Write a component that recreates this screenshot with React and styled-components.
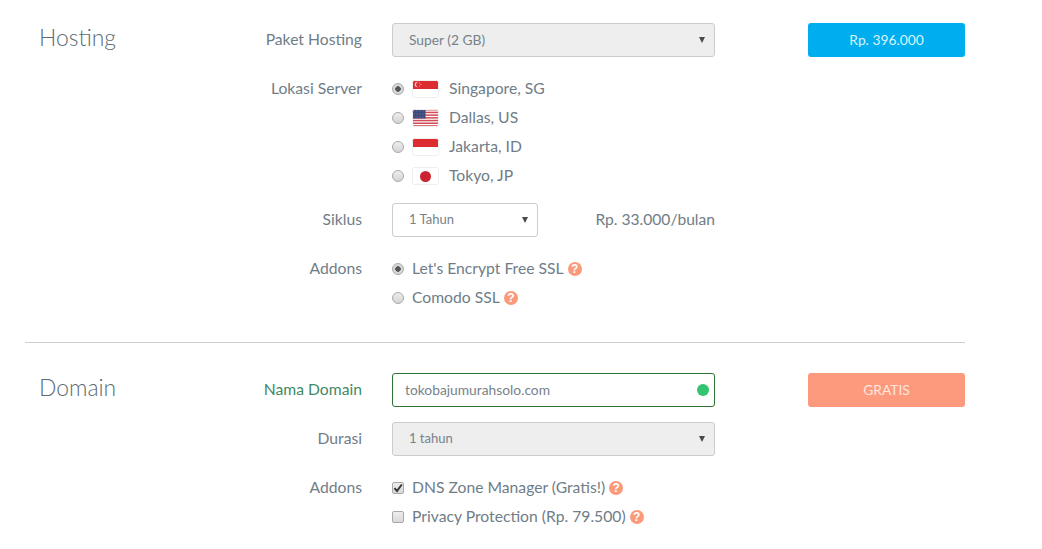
import React from "react";
import styled, { createGlobalStyle } from "styled-components";

const Global = createGlobalStyle`
  html, body { margin: 0; padding: 0; background: #fff; }
  body { font-family: "Lato", "Open Sans", sans-serif; color: #6f7d88; overflow: hidden; height: 549px; }
`;
const Page = styled.div`width: 940px; margin-left: 25px; padding-top: 23px;`;
const Section = styled.section`
  display: flex;
  padding-bottom: ${p => p.$pb || 0}px;
  border-bottom: ${p => (p.$line ? "1px solid #cfcfcf" : "none")};
  margin-bottom: ${p => p.$mb || 0}px;
`;
const Title = styled.h2`
  width: 215px; margin: 0; padding-left: 14px; box-sizing: border-box;
  font-size: 22.9px; font-weight: 300; line-height: 28px; color: #5c6a73;
`;
const Fields = styled.div`display: flex; flex-direction: column;`;
const Row = styled.div`display: flex; align-items: flex-start; margin-bottom: ${p => p.$mb ?? 0}px;`;
const Label = styled.label`
  width: 122px; margin-right: 30px; text-align: right; font-size: 15.7px; white-space: nowrap;
  line-height: ${p => p.$lh || 32}px; color: ${p => p.$ok ? "#3f8a64" : "#6f7d88"}; flex: none;
`;
const Control = styled.div`width: 323px; flex: none;`;
const SelectBox = styled.div`
  display: flex; align-items: center; justify-content: space-between; box-sizing: border-box;
  width: ${p => p.$w || 323}px; height: 34px; padding: 0 9px 2px 16px; border-radius: 3px;
  border: 1px solid #cccccc; background: ${p => p.$plain ? "#fff" : "#eeeeee"};
  font-size: ${p => p.$fs || 13.8}px; color: #77828b;
`;
const Caret = styled.i`
  width: 0; height: 0; margin-top: 2px; border-left: 3.5px solid transparent; border-right: 3.5px solid transparent;
  border-top: 6px solid #4a4a4a;
`;
const Side = styled.div`
  box-sizing: border-box; padding-bottom: 2px;
  width: 157px; height: 34px; margin-left: 93px; flex: none; border-radius: 3px;
  display: flex; align-items: center; justify-content: center; font-size: 13.8px;
  color: ${p => p.$fg}; background: ${p => p.$bg};
`;
const Options = styled.div`display: flex; flex-direction: column;`;
const Option = styled.div`
  box-sizing: border-box; padding-bottom: 2px;
  display: flex; align-items: center; height: 29px; font-size: 15.7px; color: #6f7d88; white-space: nowrap;
`;
const Radio = styled.span`
  box-sizing: border-box; width: 12px; height: 12px; border-radius: 50%; flex: none; margin: 2px 8px 0 0;
  border: 1px solid #a9a9a9; background: ${p => p.$on ? "radial-gradient(circle, #555 0 2.5px, #d8d8d8 3px)" : "linear-gradient(#eeeeee, #d4d4d4)"};
`;
const Check = styled.span`
  box-sizing: border-box; width: 12px; height: 12px; border-radius: 2px; flex: none; margin: 2px 8px 0 0;
  border: 1px solid #a9a9a9; background: linear-gradient(#eeeeee, #d8d8d8);
  display: flex; align-items: center; justify-content: center;
`;
const FlagSvg = styled.svg`width: 27px; height: 18px; flex: none; margin: 2px 10px 0 0; display: block;`;
const Help = styled.span`
  width: 14px; height: 14px; border-radius: 50%; background: #fb9a7b; color: #fff; margin: 2px 0 0 4px; flex: none;
  display: inline-flex; align-items: center; justify-content: center; font: 700 12px/14px "Liberation Sans", sans-serif;
`;
const Price = styled.span`margin-left: auto; font-size: 15.6px; line-height: 32px; padding-bottom: 2px; color: #6f7d88;`;
const SplitControl = styled(Control)`display: flex; align-items: center;`;
const DomainInput = styled.div`
  box-sizing: border-box; height: 34px; border: 1px solid #2f7434; border-radius: 3px; padding: 0 5px 0 12px;
  display: flex; align-items: center; justify-content: space-between; font-size: 13.8px; color: #77828b;
`;
const DomainText = styled.span`padding-bottom: 2px;`;
const Dot = styled.i`width: 12px; height: 12px; border-radius: 50%; background: #32c46f;`;

const Frame = ({ id, children }) => (
  <FlagSvg viewBox="0 0 27 18">
    <defs><clipPath id={id}><rect x="0.5" y="0.5" width="26" height="17" rx="2" /></clipPath></defs>
    <g clipPath={`url(#${id})`}><rect width="27" height="18" fill="#fff" />{children}</g>
    <rect x="0.5" y="0.5" width="26" height="17" rx="2" fill="none" stroke="#efefef" />
  </FlagSvg>
);
const SG = () => (
  <Frame id="sg">
    <rect width="27" height="9" fill="#dd2c30" />
    <circle cx="5.5" cy="4.5" r="2.8" fill="#f6c9c9" /><circle cx="6.7" cy="4.5" r="2.6" fill="#dd2c30" />
    <circle cx="7.5" cy="3" r=".5" fill="#f6c9c9" /><circle cx="9" cy="4.5" r=".5" fill="#f6c9c9" /><circle cx="7.5" cy="6" r=".5" fill="#f6c9c9" />
  </Frame>
);
const US = () => (
  <Frame id="us">
    {[0, 1, 2, 3, 4, 5, 6].map(i => <rect key={i} y={i * 2.7} width="27" height="1.5" fill="#d24a55" />)}
    <rect width="13.5" height="9.5" fill="#3c4a7c" />
    {[2, 5, 8, 11].map(x => [2, 5, 8].map(y => <circle key={x + "-" + y} cx={x} cy={y} r=".45" fill="#aab2cc" />))}
  </Frame>
);
const ID = () => <Frame id="id"><rect width="27" height="9" fill="#dd2c30" /></Frame>;
const JP = () => <Frame id="jp"><circle cx="13.5" cy="9.5" r="5.5" fill="#c9242f" /></Frame>;
const Tick = () => (
  <svg width="10" height="10" viewBox="0 0 10 10"><path d="M1.5 5.2 4 8l4.8-6.5" fill="none" stroke="#333" strokeWidth="2" /></svg>
);

export default function App() {
  return (
    <Page>
      <Global />
      <Section $line $pb={30} $mb={30}>
        <Title>Hosting</Title>
        <Fields>
          <Row $mb={17}>
            <Label>Paket Hosting</Label>
            <Control><SelectBox>Super (2 GB)<Caret /></SelectBox></Control>
            <Side $bg="#00aeef" $fg="#d8f3fd">Rp. 396.000</Side>
          </Row>
          <Row $mb={13}>
            <Label $lh={29}>Lokasi Server</Label>
            <Options>
              <Option><Radio $on /><SG />Singapore, SG</Option>
              <Option><Radio /><US />Dallas, US</Option>
              <Option><Radio /><ID />Jakarta, ID</Option>
              <Option><Radio /><JP />Tokyo, JP</Option>
            </Options>
          </Row>
          <Row $mb={17}>
            <Label>Siklus</Label>
            <SplitControl>
              <SelectBox $w={146} $plain $fs={13}>1 Tahun<Caret /></SelectBox>
              <Price>Rp. 33.000/bulan</Price>
            </SplitControl>
          </Row>
          <Row>
            <Label $lh={29}>Addons</Label>
            <Options>
              <Option><Radio $on />Let's Encrypt Free SSL<Help>?</Help></Option>
              <Option><Radio />Comodo SSL<Help>?</Help></Option>
            </Options>
          </Row>
        </Fields>
      </Section>
      <Section>
        <Title>Domain</Title>
        <Fields>
          <Row $mb={15}>
            <Label $ok>Nama Domain</Label>
            <Control><DomainInput><DomainText>tokobajumurahsolo.com</DomainText><Dot /></DomainInput></Control>
            <Side $bg="#fd9a7e" $fg="#ffe6de">GRATIS</Side>
          </Row>
          <Row $mb={17}>
            <Label>Durasi</Label>
            <Control><SelectBox $fs={13}>1 tahun<Caret /></SelectBox></Control>
          </Row>
          <Row>
            <Label $lh={29}>Addons</Label>
            <Options>
              <Option><Check><Tick /></Check>DNS Zone Manager (Gratis!)<Help>?</Help></Option>
              <Option><Check />Privacy Protection (Rp. 79.500)<Help>?</Help></Option>
            </Options>
          </Row>
        </Fields>
      </Section>
    </Page>
  );
}
